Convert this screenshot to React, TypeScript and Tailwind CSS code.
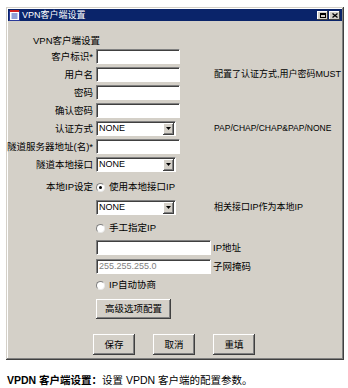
import type { ReactNode } from "react";

const FONT = "font-['Liberation_Sans','Noto_Sans_CJK_SC',sans-serif]";

function TextBox({ w = "w-[84px]", value = "", muted = false }: { w?: string; value?: string; muted?: boolean }) {
  return (
    <div
      className={`${w} shrink-0 h-[15px] bg-white border border-t-[#808080] border-l-[#808080] border-b-white border-r-white shadow-[inset_1px_1px_#404040] flex items-center pl-[2px] text-[9px] leading-none ${
        muted ? "text-[#808080]" : "text-black"
      }`}
    >
      {value}
    </div>
  );
}

function Select({ value = "NONE" }: { value?: string }) {
  return (
    <div className="w-[80px] shrink-0 h-[15px] bg-white border border-t-[#808080] border-l-[#808080] border-b-white border-r-white shadow-[inset_1px_1px_#404040] flex items-center">
      <span className="flex-1 pl-[2px] text-[9px] leading-none text-black">{value}</span>
      <div className="w-[11px] h-[12px] mr-[1px] bg-[#d4d0c8] shadow-[inset_-1px_-1px_#404040,inset_1px_1px_#fff,inset_-2px_-2px_#808080] flex items-center justify-center">
        <svg width="5" height="3" viewBox="0 0 5 3">
          <path d="M0 0h5L2.5 3z" fill="#000" />
        </svg>
      </div>
    </div>
  );
}

function Radio({ checked = false, label }: { checked?: boolean; label: string }) {
  return (
    <div className="flex items-center gap-[4px] h-[12px]">
      <div className="w-[9px] h-[9px] shrink-0 rounded-full bg-white border border-t-[#808080] border-l-[#808080] border-b-[#e8e8e8] border-r-[#e8e8e8] flex items-center justify-center">
        {checked && <div className="w-[3px] h-[3px] rounded-full bg-black" />}
      </div>
      <span className="text-[9.5px] leading-none text-black whitespace-nowrap">{label}</span>
    </div>
  );
}

function Btn({ w, h, children }: { w: string; h: string; children: ReactNode }) {
  return (
    <div
      className={`${w} ${h} shrink-0 bg-[#d4d0c8] shadow-[inset_-1px_-1px_#404040,inset_1px_1px_#fff,inset_-2px_-2px_#808080] flex items-center justify-center text-[9.5px] leading-none text-black`}
    >
      {children}
    </div>
  );
}

function Row({ label, children }: { label: string; children: ReactNode }) {
  return (
    <div className="flex items-center h-[15px]">
      <div className="w-[85px] shrink-0 flex justify-end">
        <span className="whitespace-nowrap text-[9.5px] leading-none text-black">{label}</span>
      </div>
      <div className="ml-[3px] flex items-center">{children}</div>
    </div>
  );
}

export default function App() {
  return (
    <div className={`w-[348px] h-[388px] bg-white overflow-hidden ${FONT}`}>
      <div className="pt-[7px] pl-[6px]">
        {/* window */}
        <div className="w-[338px] bg-[#d4d0c8] p-[2px] shadow-[inset_-1px_-1px_#404040,inset_1px_1px_#d4d0c8,inset_-2px_-2px_#808080,inset_2px_2px_#fff]">
          {/* title bar */}
          <div className="h-[12px] bg-[#0a246a] flex items-center pl-[1px] pr-[2px]">
            <svg width="11" height="11" viewBox="0 0 11 11">
              <rect x="0.5" y="1.5" width="10" height="9" fill="#fff" stroke="#2a3a9a" />
              <rect x="1" y="0" width="9" height="2" fill="#d02020" />
              <path d="M2.5 4h6M2.5 6h6M2.5 8h6" stroke="#2040b0" strokeWidth="1" />
            </svg>
            <span className="ml-[2px] text-[9px] leading-none text-white">VPN客户端设置</span>
            <div className="ml-auto flex gap-[1px]">
              <div className="w-[11px] h-[9px] bg-[#d4d0c8] shadow-[inset_-1px_-1px_#404040,inset_1px_1px_#fff] flex items-center justify-center">
                <div className="w-[6px] h-[5px] border border-black border-t-2" />
              </div>
              <div className="w-[11px] h-[9px] bg-[#d4d0c8] shadow-[inset_-1px_-1px_#404040,inset_1px_1px_#fff] flex items-center justify-center">
                <svg width="6" height="5" viewBox="0 0 6 5">
                  <path d="M0.5 0.5l5 4M5.5 0.5l-5 4" stroke="#000" strokeWidth="1.3" />
                </svg>
              </div>
            </div>
          </div>

          {/* body */}
          <div className="flex flex-col pb-[3px]">
            <div className="mt-[14px] ml-[25px] h-[12px] flex items-center text-[9.5px] leading-none text-black">
              VPN客户端设置
            </div>

            <div className="mt-[2px] flex flex-col gap-[3px]">
              <Row label="客户标识*">
                <TextBox />
              </Row>
              <Row label="用户名">
                <TextBox />
                <span className="ml-[34px] text-[9px] leading-none whitespace-nowrap">配置了认证方式,用户密码MUST</span>
              </Row>
              <Row label="密码">
                <TextBox />
              </Row>
              <Row label="确认密码">
                <TextBox />
              </Row>
              <Row label="认证方式">
                <Select />
                <span className="ml-[38px] text-[8.5px] leading-none whitespace-nowrap">PAP/CHAP/CHAP&amp;PAP/NONE</span>
              </Row>
              <Row label="隧道服务器地址(名)*">
                <TextBox />
              </Row>
              <Row label="隧道本地接口">
                <Select />
              </Row>
            </div>

            <div className="mt-[9px] flex items-center h-[12px]">
              <div className="w-[85px] shrink-0 flex justify-end">
                <span className="whitespace-nowrap text-[9.5px] leading-none">本地IP设定</span>
              </div>
              <div className="ml-[3px]">
                <Radio checked label="使用本地接口IP" />
              </div>
            </div>

            <div className="ml-[88px] flex flex-col items-start">
              <div className="mt-[7px] flex items-center">
                <Select />
                <span className="ml-[38px] text-[9px] leading-none whitespace-nowrap">相关接口IP作为本地IP</span>
              </div>
              <div className="mt-[7px]">
                <Radio label="手工指定IP" />
              </div>
              <div className="mt-[6px] flex items-center">
                <TextBox w="w-[115px]" />
                <span className="ml-[2px] text-[9.5px] leading-none whitespace-nowrap">IP地址</span>
              </div>
              <div className="mt-[4px] flex items-center">
                <TextBox w="w-[115px]" value="255.255.255.0" muted />
                <span className="ml-[2px] text-[9.5px] leading-none whitespace-nowrap">子网掩码</span>
              </div>
              <div className="mt-[5px]">
                <Radio label="IP自动协商" />
              </div>
              <div className="mt-[8px]">
                <Btn w="w-[75px]" h="h-[20px]">高级选项配置</Btn>
              </div>
            </div>

            <div className="mt-[15px] ml-[85px] flex gap-[18px]">
              <Btn w="w-[42px]" h="h-[21px]">保存</Btn>
              <Btn w="w-[42px]" h="h-[21px]">取消</Btn>
              <Btn w="w-[42px]" h="h-[21px]">重填</Btn>
            </div>
          </div>
        </div>
      </div>

      <div className="mt-[15px] ml-[7px] text-[10.5px] leading-none text-black whitespace-nowrap">
        <span className="font-bold">VPDN 客户端设置：</span>设置 VPDN 客户端的配置参数。
      </div>
    </div>
  );
}
